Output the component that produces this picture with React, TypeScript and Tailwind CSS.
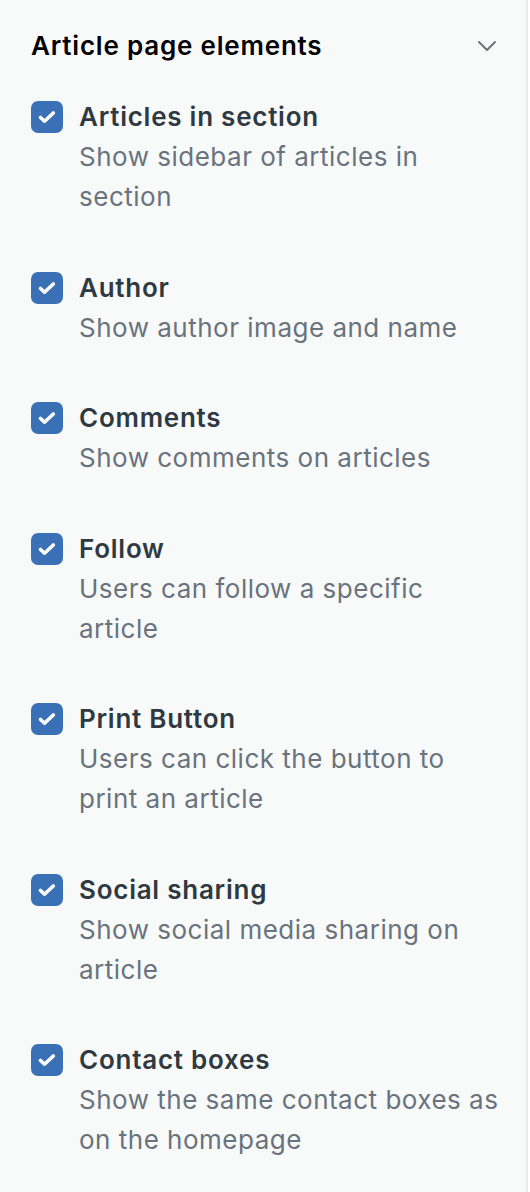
import { ChevronDown } from 'lucide-react'

const items = [
  { title: 'Articles in section', desc: 'Show sidebar of articles in section' },
  { title: 'Author', desc: 'Show author image and name' },
  { title: 'Comments', desc: 'Show comments on articles' },
  { title: 'Follow', desc: 'Users can follow a specific article' },
  { title: 'Print Button', desc: 'Users can click the button to print an article' },
  { title: 'Social sharing', desc: 'Show social media sharing on article' },
  { title: 'Contact boxes', desc: 'Show the same contact boxes as on the homepage' },
]

function Check() {
  return (
    <span className="mt-1 flex h-8 w-8 shrink-0 rounded-[7px] bg-[#3a70b5]">
      <svg viewBox="0 0 32 32" className="h-8 w-8" fill="none">
        <path d="M9.5 16.5 13.5 20.2 22.3 12" stroke="white" strokeWidth="3.6" strokeLinecap="round" strokeLinejoin="round" />
      </svg>
    </span>
  )
}

export default function App() {
  return (
    <div className="min-h-screen bg-white">
      <div
        className="min-h-[1192px] w-[528px] border-r-2 border-[#e9ebed] bg-[#f8f9f9] pl-[31px] pr-[20px] pt-[26px]"
        style={{ fontFamily: 'Inter, "Noto Sans", sans-serif' }}
      >
        <div className="flex h-10 items-center justify-between">
          <h2 className="text-[26px] font-semibold leading-10 tracking-[0.8px] text-[#000]">Article page elements</h2>
          <ChevronDown className="mr-[3px] h-8 w-8 text-[#68737d]" strokeWidth={1.5} />
        </div>
        <div className="mt-[31px] flex flex-col gap-[50.5px]">
          {items.map((it) => (
            <div key={it.title} className="flex gap-4">
              <Check />
              <div className="flex flex-col">
                <div className="text-[26px] font-semibold leading-10 tracking-[0.75px] text-[#2f3941]">{it.title}</div>
                <div className="text-[26px] leading-10 tracking-[0.5px] text-[#68737d]">{it.desc}</div>
              </div>
            </div>
          ))}
        </div>
      </div>
    </div>
  )
}
